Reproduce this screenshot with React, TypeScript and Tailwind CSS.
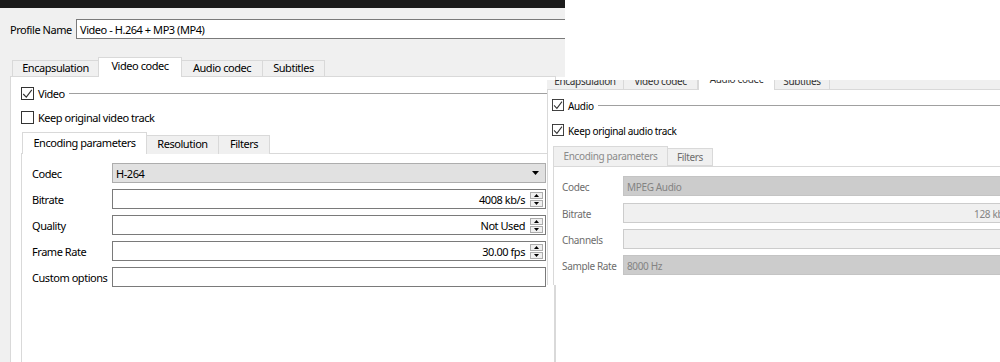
import React from "react";

function Check({ size = 13 }: { size?: number }) {
  return (
    <svg width={size} height={size} viewBox="0 0 13 13" className="shrink-0">
      <rect x="0.5" y="0.5" width="12" height="12" fill="#fff" stroke="#333" />
    </svg>
  );
}

function Checked({ size = 13 }: { size?: number }) {
  return (
    <svg width={size} height={size} viewBox="0 0 13 13" className="shrink-0">
      <rect x="0.5" y="0.5" width="12" height="12" fill="#fff" stroke="#333" />
      <polyline points="2.2,7 5.3,10.2 10.8,2.8" fill="none" stroke="#333" strokeWidth="1.1" />
    </svg>
  );
}

function Spin() {
  return (
    <div className="flex flex-col gap-px w-[13px] ml-[5px] mr-[2px] shrink-0">
      <div className="h-[7px] border border-[#adadad] bg-[#f0f0f0] flex items-center justify-center">
        <svg width="5" height="3" viewBox="0 0 5 3">
          <polygon points="2.5,0 5,3 0,3" fill="#000" />
        </svg>
      </div>
      <div className="h-[7px] border border-[#adadad] bg-[#f0f0f0] flex items-center justify-center">
        <svg width="5" height="3" viewBox="0 0 5 3">
          <polygon points="0,0 5,0 2.5,3" fill="#000" />
        </svg>
      </div>
    </div>
  );
}

export default function App() {
  const videoRows = [
    { label: "Codec", kind: "combo", value: "H-264" },
    { label: "Bitrate", kind: "spin", value: "4008 kb/s" },
    { label: "Quality", kind: "spin", value: "Not Used" },
    { label: "Frame Rate", kind: "spin", value: "30.00 fps" },
    { label: "Custom options", kind: "text", value: "" },
  ];

  const audioRows = [
    { label: "Codec", kind: "combo", value: "MPEG Audio", mt: "mt-[9px]" },
    { label: "Bitrate", kind: "spin", value: "128 kb/s", mt: "mt-[7px]" },
    { label: "Channels", kind: "spin", value: "", mt: "mt-[6px]" },
    { label: "Sample Rate", kind: "combo", value: "8000 Hz", mt: "mt-[6px]" },
  ];

  return (
    <div className="relative w-[1000px] h-[362px] bg-white overflow-hidden font-['Noto_Sans',sans-serif] text-[11px] tracking-[-0.45px] text-black">
      {/* fenêtre principale */}
      <div className="w-[565px] h-full flex flex-col overflow-hidden">
        <div className="h-[8px] bg-[#1b1b1b] shrink-0" />

        <div className="h-[69px] bg-[#f0f0f0] shrink-0 flex flex-col">
          {/* Profile name */}
          <div className="mt-[11px] h-[20px] flex items-center">
            <span className="w-[76px] pl-[10px] shrink-0 relative top-px">Profile Name</span>
            <div className="w-[520px] h-[20px] shrink-0 border border-[#7a7a7a] bg-white pl-[3px] flex items-center">
              <span className="relative top-px">Video - H.264 + MP3 (MP4)</span>
            </div>
          </div>

          {/* onglets */}
          <div className="mt-[18px] h-[20px] flex items-start pl-[12px] relative z-10">
            <div className="mt-[3px] w-[86px] h-[16px] border-t border-l border-[#d9d9d9] bg-[#f0f0f0] flex items-center justify-center">
              Encapsulation
            </div>
            <div className="w-[84px] h-[20px] border-t border-x border-[#d9d9d9] bg-white flex items-center justify-center pb-[2px]">
              Video codec
            </div>
            <div className="mt-[3px] w-[80px] h-[16px] border-t border-[#d9d9d9] bg-[#f0f0f0] flex items-center justify-center">
              Audio codec
            </div>
            <div className="mt-[3px] w-[63px] h-[16px] border-t border-x border-[#d9d9d9] bg-[#f0f0f0] flex items-center justify-center">
              Subtitles
            </div>
          </div>
        </div>

        <div className="flex-1 w-[556px] bg-[#f0f0f0] pl-[10px] flex">
          <div className="-mt-px flex-1 bg-white border-t border-x border-[#d9d9d9] flex flex-col">
            <div className="mt-[10px] h-[13px] flex items-center pl-[10px]">
              <Checked />
              <span className="ml-[4px] relative top-px">Video</span>
              <div className="ml-[4px] flex-1 h-px bg-[#a0a0a0]" />
            </div>
            <div className="mt-[11px] h-[13px] flex items-center pl-[10px]">
              <Check />
              <span className="ml-[4px] relative top-px">Keep original video track</span>
            </div>

            {/* sous-onglets */}
            <div className="mt-[8px] ml-[10px] flex-1 flex flex-col">
              <div className="h-[22px] flex items-start pl-[1px] relative z-10">
                <div className="w-[125px] h-[22px] border-t border-x border-[#d9d9d9] bg-white flex items-center justify-center pb-[1px]">
                  Encoding parameters
                </div>
                <div className="mt-[3px] w-[72px] h-[19px] border-t border-r border-[#d9d9d9] bg-[#f0f0f0] flex items-center justify-center pb-[1px]">
                  Resolution
                </div>
                <div className="mt-[3px] w-[51px] h-[19px] border-t border-r border-[#d9d9d9] bg-[#f0f0f0] flex items-center justify-center pb-[1px]">
                  Filters
                </div>
              </div>
              <div className="-mt-px flex-1 border-t border-x border-[#d9d9d9] flex flex-col gap-[6px] pt-[9px] pl-[10px]">
                {videoRows.map((row) => (
                  <div key={row.label} className="h-[20px] flex items-center">
                    <span className="w-[80px] shrink-0 relative top-px">{row.label}</span>
                    {row.kind === "combo" && (
                      <div className="w-[434px] h-[20px] border border-[#adadad] bg-[#e1e1e1] pl-[3px] pr-[6px] flex items-center justify-between">
                        <span className="relative top-px">{row.value}</span>
                        <svg width="7" height="4" viewBox="0 0 7 4">
                          <polygon points="0,0 7,0 3.5,4" fill="#000" />
                        </svg>
                      </div>
                    )}
                    {row.kind === "spin" && (
                      <div className="w-[434px] h-[20px] border border-[#7a7a7a] bg-white flex items-center justify-end">
                        <span className="relative top-px">{row.value}</span>
                        <Spin />
                      </div>
                    )}
                    {row.kind === "text" && <div className="w-[434px] h-[20px] border border-[#7a7a7a] bg-white" />}
                  </div>
                ))}
              </div>
            </div>
          </div>
        </div>
      </div>

      {/* seconde capture : onglet Audio codec */}
      <div className="absolute left-[547px] top-[80px] w-[453px] h-[205px] bg-white overflow-hidden flex flex-col text-[10px] tracking-[-0.35px]">
        <div className="h-[10px] shrink-0 flex bg-[#f0f0f0] text-[#333]">
          {[
            { t: "Encapsulation", w: "w-[77px]", on: false },
            { t: "Video codec", w: "w-[74px]", on: false },
            { t: "Audio codec", w: "w-[77px]", on: true },
            { t: "Subtitles", w: "w-[55px]", on: false },
          ].map((tab) => (
            <div
              key={tab.t}
              className={
                tab.on
                  ? `${tab.w} h-[10px] bg-white border-x border-[#d9d9d9] overflow-hidden`
                  : `${tab.w} h-[10px] border-r border-b border-[#d9d9d9] overflow-hidden`
              }
            >
              <div className={tab.on ? "-mt-[11px] h-[20px] leading-[20px] text-center" : "-mt-[9px] h-[20px] leading-[20px] text-center"}>
                {tab.t}
              </div>
            </div>
          ))}
          <div className="flex-1 border-b border-[#d9d9d9]" />
        </div>

        <div className="flex-1 border-l border-[#d9d9d9] flex flex-col">
          <div className="mt-[9px] h-[12px] flex items-center pl-[4px]">
            <Checked size={12} />
            <span className="ml-[4px] relative top-px">Audio</span>
            <div className="ml-[4px] flex-1 h-px bg-[#a0a0a0]" />
          </div>
          <div className="mt-[13px] h-[12px] flex items-center pl-[4px]">
            <Checked size={12} />
            <span className="ml-[4px] relative top-px">Keep original audio track</span>
          </div>

          <div className="mt-[10px] ml-[5px] flex-1 flex flex-col">
            <div className="h-[20px] flex items-start relative z-10 text-[#8a8a8a]">
              <div className="w-[115px] h-[20px] border-t border-x border-[#d9d9d9] bg-[#f0f0f0] flex items-center justify-center">
                Encoding parameters
              </div>
              <div className="mt-[2px] w-[45px] h-[18px] border-t border-r border-b border-[#d9d9d9] bg-[#f0f0f0] flex items-center justify-center text-[#6d6d6d]">
                Filters
              </div>
            </div>
            <div className="flex-1 border-t border-l border-[#d9d9d9] flex flex-col pl-[8px]">
              {audioRows.map((row) => (
                <div key={row.label} className={`${row.mt} h-[20px] flex items-center`}>
                  <span className="w-[61px] shrink-0 text-[#6d6d6d] relative top-px">{row.label}</span>
                  {row.kind === "combo" ? (
                    <div className="w-[420px] h-[20px] shrink-0 border border-[#c4c4c4] bg-[#cccccc] pl-[3px] flex items-center text-[#838383]">
                      <span className="relative top-px">{row.value}</span>
                    </div>
                  ) : (
                    <div className="w-[409px] h-[20px] shrink-0 border border-[#cccccc] bg-[#f0f0f0] flex items-center justify-end text-[#838383]">
                      <span className="relative top-px">{row.value}</span>
                      <div className="w-[13px] ml-[5px] mr-[2px]" />
                    </div>
                  )}
                </div>
              ))}
            </div>
          </div>
        </div>
      </div>
    </div>
  );
}
